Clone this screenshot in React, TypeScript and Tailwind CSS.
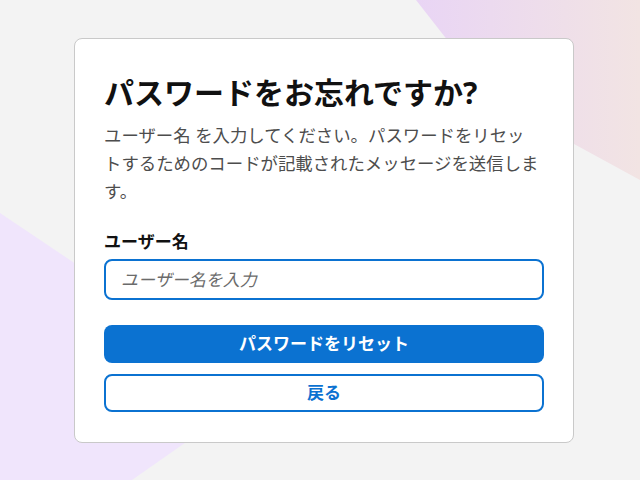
export default function App() {
    return (
        <div
            className="relative flex h-[480px] w-[640px] items-center justify-center overflow-hidden bg-[#f3f3f3] pl-2"
            style={{ fontFamily: '"Noto Sans", "Noto Sans CJK JP", sans-serif' }}
        >
            <svg className="absolute inset-0" width="640" height="480" viewBox="0 0 640 480">
                <defs>
                    <linearGradient id="tr" x1="0" y1="0" x2="1" y2="0">
                        <stop offset="0" stopColor="#e9d5f5" />
                        <stop offset="1" stopColor="#f2e4e3" />
                    </linearGradient>
                </defs>
                <polygon points="416,0 640,0 640,180 495,101" fill="url(#tr)" />
                <polygon points="0,213 262,389 132,480 0,480" fill="#f0e5fc" />
            </svg>

            <div className="relative w-[500px] rounded-lg border border-[#c9c9c9] bg-white px-[29px] pb-[30px] pt-[34px]">
                <h1 className="text-[30px] font-bold leading-[39px] text-[#111]">パスワードをお忘れですか?</h1>
                <p className="mt-[9px] text-[17.4px] leading-[28px] text-[#4d4d4d]">
                    ユーザー名 を入力してください。パスワードをリセッ
                    <br />
                    トするためのコードが記載されたメッセージを送信します。
                </p>

                <label className="mt-[24px] block text-[17px] font-bold leading-[26px] text-[#111]">ユーザー名</label>
                <input
                    className="mt-[4px] h-[41px] w-full rounded-lg border-2 border-[#0b72d1] bg-white px-[15px] text-[17px] text-[#222] placeholder:italic placeholder:text-[#6b6b6b] focus:outline-none"
                    placeholder="ユーザー名を入力"
                    type="text"
                />

                <button className="mt-[25px] flex h-[38px] w-full items-center justify-center rounded-lg bg-[#0b72d1] text-[17px] font-bold text-white">
                    パスワードをリセット
                </button>
                <button className="mt-[11px] flex h-[38px] w-full items-center justify-center rounded-lg border-2 border-[#0b72d1] bg-white text-[17px] font-bold text-[#0b72d1]">
                    戻る
                </button>
            </div>
        </div>
    );
}
